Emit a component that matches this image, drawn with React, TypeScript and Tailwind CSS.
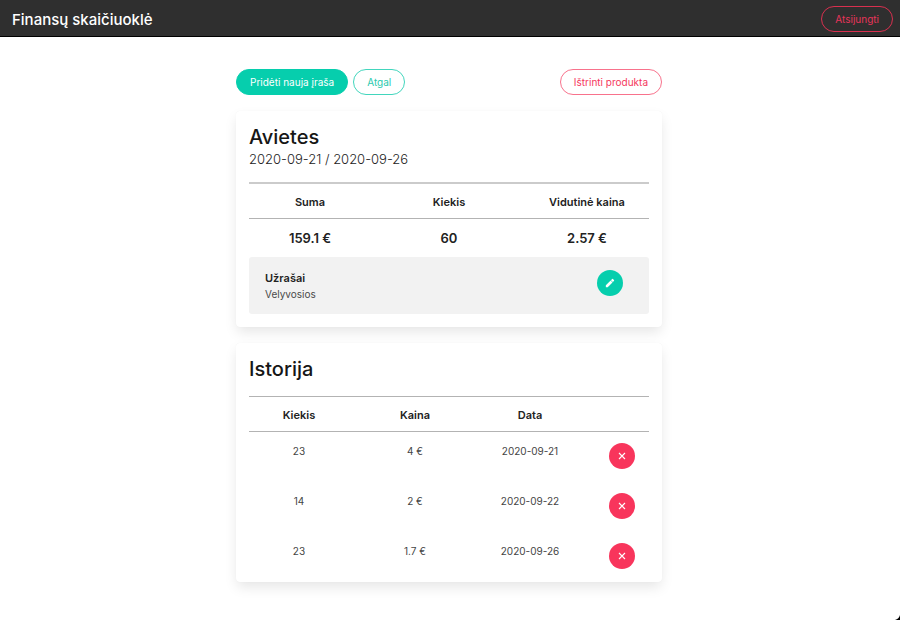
import type { ReactNode } from "react";

type Entry = { amount: string; price: string; date: string };

const history: Entry[] = [
  { amount: "23", price: "4 €", date: "2020-09-21" },
  { amount: "14", price: "2 €", date: "2020-09-22" },
  { amount: "23", price: "1.7 €", date: "2020-09-26" },
];

const pill = "h-[26px] rounded-full border px-[13px] text-[10px] leading-4";

function Card({ children }: { children: ReactNode }) {
  return (
    <section className="rounded-[4px] bg-white px-[13px] pt-[14px] shadow-[0_6px_13px_-1px_rgba(10,10,10,0.1),0_0_1px_rgba(10,10,10,0.06)]">
      {children}
    </section>
  );
}

function PencilIcon() {
  return (
    <svg viewBox="0 0 24 24" className="size-[10px]" fill="currentColor" aria-hidden="true">
      <path d="M2 17.5V22h4.500L18 10.500l-4.500-4.500L2 17.500zM21.500 7a1.400 1.400 0 0 0 0-2L19 2.500a1.400 1.400 0 0 0-2 0l-2.700 2.700L18.800 9.700l2.700-2.700z" />
    </svg>
  );
}

function CrossIcon() {
  return (
    <svg viewBox="0 0 8 8" className="size-2" fill="none" stroke="currentColor" strokeWidth="1.1" aria-hidden="true">
      <path d="M1 1l6 6M7 1L1 7" />
    </svg>
  );
}

export default function App() {
  return (
    <div className="relative min-h-screen bg-white font-['Inter','Liberation_Sans',sans-serif] text-[#222]">
      <header className="flex h-[37px] items-center justify-between border-b border-black bg-[#2f2f2f] pt-[2px] pr-[7px] pl-3">
        <h1 className="pt-[2px] text-[15px] leading-5 font-medium text-white">Finansų skaičiuoklė</h1>
        <button type="button" className={`${pill} border-[#d9304f] text-[#e8345a]`}>
          Atsijungti
        </button>
      </header>

      <main className="pr-[18px] pb-8 pl-4">
        <div className="mx-auto flex max-w-[426px] flex-col gap-4 pt-8">
          <div className="flex items-center justify-between">
            <div className="flex gap-[5px]">
              <button type="button" className={`${pill} border-[#06cead] bg-[#06cead] text-white`}>
                Pridėti nauja įraša
              </button>
              <button type="button" className={`${pill} border-[#42d6bd] bg-white text-[#2ac9ae]`}>
                Atgal
              </button>
            </div>
            <button type="button" className={`${pill} border-[#f8728c] bg-white text-[#f5365c]`}>
              Ištrinti produkta
            </button>
          </div>

          <Card>
            <div className="pb-[13px]">
              <h2 className="text-[20px] leading-6 font-medium text-[#161616]">Avietes</h2>
              <p className="text-[13px] leading-5 font-light text-[#222]">2020-09-21 / 2020-09-26</p>
              <table className="mt-[13px] w-full table-fixed border-collapse text-center">
                <thead>
                  <tr className="h-[35px] border-t-2 border-b border-t-[#cbcbcb] border-b-[#b3b3b3] text-[11px] leading-4">
                    <th className="w-[33%] pt-[2px] pr-[10px] font-semibold">Suma</th>
                    <th className="w-[34%] px-2 pt-[2px] font-semibold">Kiekis</th>
                    <th className="pt-[2px] pl-2 font-semibold">Vidutinė kaina</th>
                  </tr>
                </thead>
                <tbody>
                  <tr className="h-[39px] text-[13px] leading-5 font-semibold">
                    <td className="pr-[10px]">159.1 €</td>
                    <td className="px-2">60</td>
                    <td className="pl-2">2.57 €</td>
                  </tr>
                </tbody>
              </table>
              <div className="flex h-[57px] items-start justify-between rounded-[3px] bg-[#f2f2f2] pt-[13px] pr-[26px] pl-4">
                <div>
                  <h3 className="text-[11px] leading-4 font-semibold">Užrašai</h3>
                  <p className="text-[10px] leading-4 text-[#4a4a4a]">Velyvosios</p>
                </div>
                <button
                  type="button"
                  aria-label="Redaguoti"
                  className="flex size-[26px] items-center justify-center rounded-full bg-[#06cead] text-white"
                >
                  <PencilIcon />
                </button>
              </div>
            </div>
          </Card>

          <Card>
            <h2 className="text-[20px] leading-6 font-medium text-[#161616]">Istorija</h2>
            <table className="mt-[15px] w-full table-fixed border-collapse text-center text-[11px] leading-4">
              <thead>
                <tr className="h-[35px] border-y border-[#b3b3b3]">
                  <th className="w-[27%] pt-[2px] pr-2 font-semibold">Kiekis</th>
                  <th className="w-[29%] px-2 pt-[2px] font-semibold">Kaina</th>
                  <th className="w-[29%] pt-[2px] pr-[10px] pl-2 font-semibold">Data</th>
                  <td className="w-[15%]" />
                </tr>
              </thead>
              <tbody className="text-[10px] leading-4 text-[#444]">
                {history.map((entry) => (
                  <tr key={entry.date} className="h-[50px] align-top">
                    <td className="pt-[11px] pr-2">{entry.amount}</td>
                    <td className="px-2 pt-[11px]">{entry.price}</td>
                    <td className="pt-[11px] pr-[10px] pl-2">{entry.date}</td>
                    <td className="pt-[11px] pl-[6px]">
                      <button
                        type="button"
                        aria-label="Ištrinti"
                        className="mx-auto flex size-[26px] items-center justify-center rounded-full bg-[#f8355c] text-white"
                      >
                        <CrossIcon />
                      </button>
                    </td>
                  </tr>
                ))}
              </tbody>
            </table>
          </Card>
        </div>
      </main>

      <svg viewBox="0 0 5 5" className="absolute right-0 bottom-0 size-[5px]" aria-hidden="true">
        <path d="M5 0v5H0Q4 4 5 0z" fill="#000" />
      </svg>
    </div>
  );
}
